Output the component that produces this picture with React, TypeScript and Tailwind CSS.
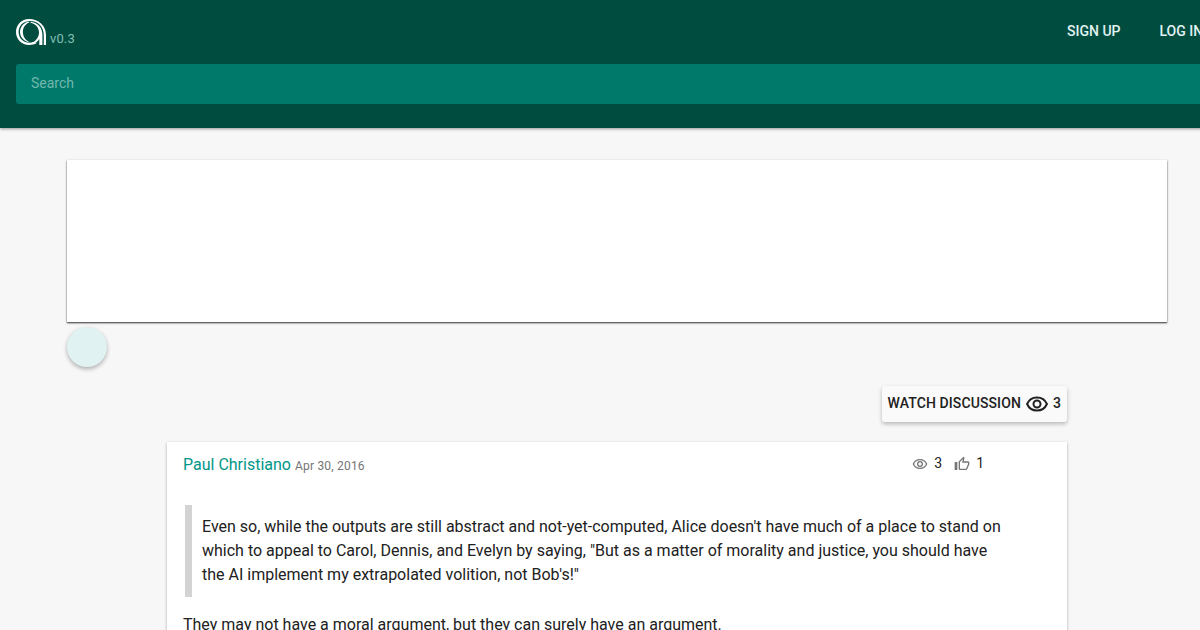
function Logo() {
  return (
    <svg width="30" height="27" viewBox="0 0 30 27" fill="#ffffff">
      {/* outer bowl and stem */}
      <path d="M13 0C22.500 0 30 6.500 30 16V26H27.800V16C27.800 8 22 2 14.500 2C7.200 1.600 2.600 7 2.600 13C2.600 19.200 7.500 23.800 13.500 23.800C15 23.800 16.500 23.500 18 22.800L20.500 24.300C18.300 25.500 16 26 13.300 26C5.500 26 0 20.300 0 13C0 5.700 5.500 0 13 0Z" />
      {/* inner crescent */}
      <path d="M12 2.600C7.500 4.300 4 8.300 4 13C4 18.500 8.500 23 14 23.300C9.500 21.500 6.900 17.700 6.900 13C6.900 8.500 9.400 5 13.500 3.300Z" />
      {/* inner stem */}
      <path d="M14.500 2.700C21.500 3.400 26.400 8.500 26.400 15.500V26H23.300V20C21.800 22.500 19.500 24.300 17 25L15.500 24C20 22 23 18 23 13.500C23 8.500 19.500 4.800 14.500 3.800Z" />
    </svg>
  );
}

function EyeIcon({ className }: { className: string }) {
  return (
    <svg className={className} viewBox="0 0 24 24" fill="none" stroke="currentColor" strokeWidth={2}>
      <path d="M2.080 12C3.800 8.050 7.600 5.500 12 5.500C16.400 5.500 20.200 8.050 21.920 12C20.200 15.950 16.400 18.500 12 18.500C7.600 18.500 3.800 15.950 2.080 12Z" />
      <circle cx={12} cy={12} r={3.5} />
    </svg>
  );
}

function ThumbUpIcon({ className }: { className: string }) {
  return (
    <svg className={className} viewBox="0 0 24 24" fill="currentColor">
      <path d="M5,9V21H1V9H5M9,21A2,2 0 0,1 7,19V9C7,8.45 7.22,7.95 7.59,7.59L14.17,1L15.23,2.06C15.5,2.33 15.67,2.7 15.67,3.11L15.64,3.43L14.69,8H21C22.11,8 23,8.9 23,10V12C23,12.26 22.95,12.5 22.86,12.73L19.84,19.78C19.54,20.5 18.83,21 18,21H9M9,19H18.03L21,12V10H12.21L13.34,4.68L9,9.03V19Z" />
    </svg>
  );
}

function Header() {
  return (
    <header className="h-32 w-[1232px] bg-[#004d40] shadow-[0_1px_3px_rgba(0,0,0,0.4)]">
      <div className="flex h-16 items-start justify-between pl-4">
        <a className="flex items-end gap-1 pt-[19px]">
          <Logo />
          <span className="text-[13px] leading-[15px] tracking-[0.13px] text-[#80bfb3]">v0.3</span>
        </a>
        <nav className="flex w-[165px] gap-[39px] pt-[21px] text-sm leading-5 font-medium whitespace-nowrap text-[#e0f2f1]">
          <a>SIGN UP</a>
          <a>LOG IN</a>
        </nav>
      </div>
      <div className="ml-4 h-10 rounded-[3px] bg-[#00796b] px-[15px] text-sm leading-[38px] text-[#71b8ae]">
        Search
      </div>
    </header>
  );
}

function Comment() {
  return (
    <article className="ml-[167px] h-[300px] w-[900px] bg-white px-4 pt-3 shadow-[0_1px_3px_rgba(0,0,0,0.25),0_1px_1px_rgba(0,0,0,0.14)]">
      <div className="flex h-6 items-start">
        <div className="flex items-baseline leading-[22px]">
          <a className="text-[#009688]">Paul Christiano</a>
          <span className="ml-1 text-xs tracking-[0.2px] text-[#757575]">Apr 30, 2016</span>
        </div>
        <div className="-mt-px mr-[67px] ml-auto flex items-center text-sm leading-5">
          <EyeIcon className="mt-px mr-[6px] size-4 text-[#757575]" />
          <span>3</span>
          <ThumbUpIcon className="mt-px mr-[6px] ml-3 size-4 text-[#757575]" />
          <span>1</span>
        </div>
      </div>
      <blockquote className="mt-[27px] ml-[2px] h-[92px] w-[822px] border-l-[7px] border-[#d3d3d3] pt-[10px] pl-[10px] leading-6">
        Even so, while the outputs are still abstract and not-yet-computed, Alice doesn't have much of a place to stand
        on which to appeal to Carol, Dennis, and Evelyn by saying, "But as a matter of morality and justice, you should
        have the AI implement my extrapolated volition, not Bob's!"
      </blockquote>
      <p className="mt-4 leading-6">They may not have a moral argument, but they can surely have an argument.</p>
    </article>
  );
}

export default function App() {
  return (
    <div className="h-[630px] w-[1200px] overflow-hidden bg-[#f7f7f7] font-[Roboto,sans-serif] text-base text-[#212121]">
      <Header />
      <div className="mt-8 ml-[67px] h-[162px] w-[1100px] bg-white shadow-[0_1px_2px_rgba(0,0,0,0.6),0_1px_1px_rgba(0,0,0,0.3)]" />
      <div className="mt-[5px] ml-[67px] size-10 rounded-full bg-[#e0f2f1] shadow-[0_2px_4px_rgba(0,0,0,0.3)]" />
      <div className="mt-[19px] flex w-[1067px] justify-end">
        <button className="flex h-9 items-center rounded-[3px] bg-[#fafafa] px-[6px] text-sm font-medium tracking-[0.1px] shadow-[0_2px_4px_rgba(0,0,0,0.26)]">
          <span className="pb-[2px]">WATCH DISCUSSION</span>
          <EyeIcon className="mr-1 ml-1 size-6" />
          <span className="pb-[2px]">3</span>
        </button>
      </div>
      <div className="mt-5">
        <Comment />
      </div>
    </div>
  );
}
